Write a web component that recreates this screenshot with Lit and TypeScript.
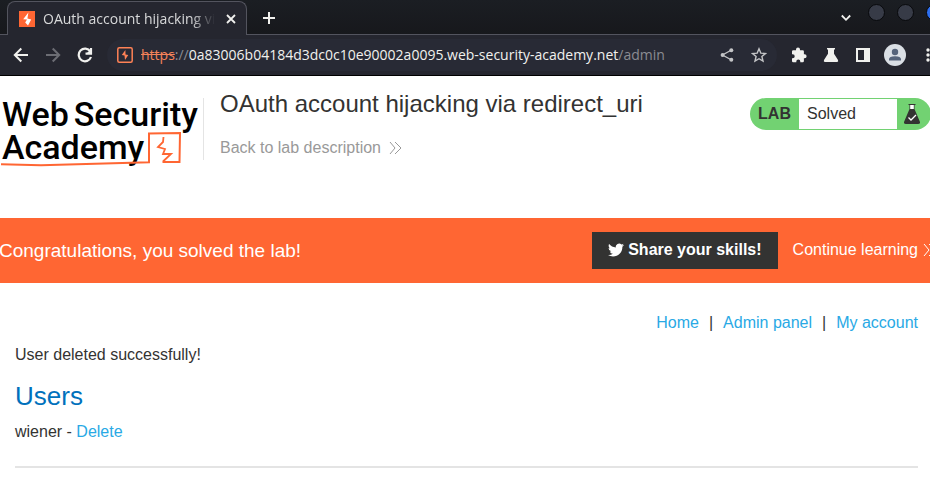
import { LitElement, html, css, svg } from "lit";
import { customElement, property } from "lit/decorators.js";

const bolt = svg`<path d="M9.4 1.5 4.2 8.2 8 8.6 6.2 11.6 9 14.5 12.2 8.6 8.4 7.6Z" />`;

const chevrons = html`<svg class="chevrons" width="13" height="14" viewBox="0 0 13 14" fill="none" stroke="currentColor" aria-hidden="true">
  <path d="M1 1l5 6-5 6M6 1l6 6-6 6" />
</svg>`;

@customElement("browser-chrome")
class BrowserChrome extends LitElement {
  @property() tabTitle = "";
  @property() site = "";
  @property() path = "";

  static styles = css`
    :host {
      display: block;
      background: #25262f;
      border-bottom: 1px solid #000;
      color: #f1f1ee;
      font-family: "Noto Sans", sans-serif;
      font-size: 14px;
      line-height: 20px;
    }
    svg { display: block; flex: none; }
    button {
      display: grid;
      place-items: center;
      flex: none;
      padding: 0;
      border: 0;
      background: none;
      color: inherit;
    }
    .strip {
      display: flex;
      height: 34px;
      padding-left: 7px;
      border-bottom: 1px solid #53545e;
      background: linear-gradient(#1b1e23, #17181c);
    }
    .tab {
      position: relative;
      box-sizing: border-box;
      display: flex;
      align-items: center;
      gap: 8px;
      width: 240px;
      height: 34px;
      margin-top: 1px;
      padding: 0 7px 0 11px;
      border: 1px solid #53545e;
      border-bottom: 0;
      border-radius: 8px 8px 0 0;
      background: #25262f;
    }
    .title {
      flex: 1;
      min-width: 0;
      overflow: hidden;
      white-space: nowrap;
      color: #d8d9da;
      font-family: "Open Sans", sans-serif;
      mask-image: linear-gradient(to right, #000 86%, transparent);
    }
    .close { width: 16px; height: 20px; }
    .add { width: 24px; margin: 1px auto 0 10px; }
    .window { display: flex; gap: 12px; margin-right: -13px; }
    .window button { width: 17px; height: 24px; }
    .menu { margin: 6px 2px 0 0; }
    .dot {
      width: 15px;
      height: 15px;
      border: 1px solid #08090c;
      border-radius: 50%;
      background: #373b47;
    }
    .dot.blue { background: #2d6ff0; }
    .bar {
      display: flex;
      align-items: center;
      height: 40px;
      padding-left: 13px;
    }
    .nav { display: flex; gap: 16px; }
    .nav button { width: 16px; height: 24px; }
    .off { color: #6c6d74; }
    .address {
      flex: 1;
      min-width: 0;
      display: flex;
      align-items: center;
      gap: 8px;
      height: 32px;
      margin: 0 14px;
      padding: 0 10px;
      border-radius: 16px;
      background: #282a35;
    }
    .url { flex: 1; white-space: nowrap; color: #8b8c92; font-family: "Open Sans", sans-serif; }
    .url s { color: #f5835a; }
    .url b { font-weight: 400; color: #f1f1ee; }
    .soft { display: flex; gap: 16px; color: #c4c5c7; }
    .tools { display: flex; align-items: center; gap: 16px; margin-right: -5px; }
    .profile { margin: 0 -3px; }
  `;

  render() {
    return html`
      <div class="strip">
        <div class="tab">
          <svg width="16" height="16" viewBox="0 0 16 16" aria-hidden="true">
            <rect width="16" height="16" fill="#ff6633" />
            <g fill="#fff">${bolt}</g>
          </svg>
          <span class="title">${this.tabTitle}</span>
          <button class="close" aria-label="Close tab">
            <svg width="10" height="10" viewBox="0 0 10 10" stroke="currentColor" stroke-width="1.8"><path d="M1 1l8 8M9 1l-8 8" /></svg>
          </button>
        </div>
        <button class="add" aria-label="New tab">
          <svg width="12" height="12" viewBox="0 0 12 12" stroke="currentColor" stroke-width="2"><path d="M6 0v12M0 6h12" /></svg>
        </button>
        <div class="window">
          <button class="menu" aria-label="Search tabs">
            <svg width="10" height="8" viewBox="0 0 10 8" fill="none" stroke="currentColor" stroke-width="1.8"><path d="M.8 1.5 5 5.8l4.200-4.300" /></svg>
          </button>
          <button aria-label="Minimize"><span class="dot"></span></button>
          <button aria-label="Maximize"><span class="dot"></span></button>
          <button aria-label="Close"><span class="dot blue"></span></button>
        </div>
      </div>
      <div class="bar">
        <div class="nav">
          <button aria-label="Back">
            <svg width="16" height="16" viewBox="0 0 16 16" fill="none" stroke="currentColor" stroke-width="2"><path d="M15 8H2M8.300 1.500 1.800 8l6.500 6.500" /></svg>
          </button>
          <button class="off" aria-label="Forward" disabled>
            <svg width="16" height="16" viewBox="0 0 16 16" fill="none" stroke="currentColor" stroke-width="2"><path d="M1 8h13M7.700 1.500 14.200 8l-6.500 6.500" /></svg>
          </button>
          <button aria-label="Reload">
            <svg width="16" height="16" viewBox="0 0 16 16" fill="none" stroke="currentColor" stroke-width="2.200"><path d="M13.300 4.500A6.300 6.300 0 1 0 14 10M14 1v5.500H8.500" /><path fill="currentColor" stroke="none" d="M15 1v6.500H8.500Z" /></svg>
          </button>
        </div>
        <div class="address">
          <svg width="16" height="16" viewBox="0 0 16 16" aria-hidden="true">
            <rect x=".8" y=".8" width="14.400" height="14.400" rx="1.500" fill="none" stroke="#ff8256" stroke-width="1.500" />
            <path d="M8.400 3 4.800 8l2.700.5L8 13l3.300-5-2.800-.6Z" fill="#ff8256" />
          </svg>
          <span class="url"><s>https</s>://<b>${this.site}</b>${this.path}</span>
          <div class="soft">
            <button aria-label="Share">
              <svg width="16" height="16" viewBox="0 0 16 16" fill="currentColor"><path d="M12.500 3 3.500 8l9 5" fill="none" stroke="currentColor" stroke-width="1.300" /><circle cx="12.300" cy="3.300" r="2" /><circle cx="3.600" cy="8" r="2" /><circle cx="12.300" cy="12.700" r="2" /></svg>
            </button>
            <button aria-label="Bookmark">
              <svg width="16" height="16" viewBox="0 0 16 16" fill="none" stroke="currentColor" stroke-width="1.400"><path d="M8 1.800l1.800 4.300 4.700.4-3.600 3 1.100 4.600L8 11.700 4 14.100l1.100-4.600-3.600-3 4.700-.4Z" /></svg>
            </button>
          </div>
        </div>
        <div class="tools">
          <button aria-label="Extensions">
            <svg width="16" height="16" viewBox="0 0 16 16" fill="currentColor"><path d="M1 4.500Q1 3.300 2.200 3.300H5V2.500a2 2 0 0 1 4 0v.8h2.700q1.200 0 1.200 1.200v2.700h.7a2 2 0 0 1 0 4h-.7V14q0 1.200-1.200 1.200H9.300v-.7a2 2 0 0 0-4 0v.7H2.200Q1 15.200 1 14v-2.800h.7a2 2 0 0 0 0-4H1Z" /></svg>
          </button>
          <button aria-label="Labs">
            <svg width="16" height="16" viewBox="0 0 16 16" fill="currentColor"><path d="M4 1h8v1.600h-1v4.200l4 6.200q.8 1.900-1 2H2q-1.800-.1-1-2l4-6.200V2.600H4Z" /></svg>
          </button>
          <button aria-label="Side panel">
            <svg width="16" height="16" viewBox="0 0 16 16"><path fill="currentColor" fill-rule="evenodd" d="M1 1h14v14H1ZM3 3v10h6V3Z" /></svg>
          </button>
          <button class="profile" aria-label="Profile">
            <svg width="22" height="22" viewBox="0 0 22 22"><circle cx="11" cy="11" r="11" fill="#dadfe5" /><g fill="#55637a"><circle cx="11" cy="8" r="3.200" /><path d="M5 16.500v-1.300q0-3 6-3t6 3v1.300Z" /></g></svg>
          </button>
          <button aria-label="More">
            <svg width="16" height="16" viewBox="0 0 16 16" fill="currentColor"><circle cx="9" cy="3" r="1.700" /><circle cx="9" cy="8" r="1.700" /><circle cx="9" cy="13" r="1.700" /></svg>
          </button>
        </div>
      </div>
    `;
  }
}

@customElement("lab-header")
class LabHeader extends LitElement {
  static styles = css`
    :host {
      display: flex;
      align-items: flex-start;
      box-sizing: border-box;
      min-height: 142px;
      padding-top: 22px;
      overflow: hidden;
    }
    svg { display: block; flex: none; }
    a { text-decoration: none; color: #999; }
    .logo {
      position: relative;
      flex: none;
      box-sizing: border-box;
      width: 204px;
      height: 62px;
      padding-left: 2px;
      border-right: 1px solid #e4e4e4;
      color: #000;
      font: 500 34px/33px Roboto, sans-serif;
    }
    .words { display: flex; gap: 5px; }
    .mark { position: absolute; left: 0; top: 32px; }
    .heading { flex: 1; min-width: 0; padding-left: 16px; }
    h2 { margin: 0; padding-bottom: 28px; font-size: 24px; font-weight: 400; line-height: 12px; }
    .back { display: flex; align-items: center; gap: 8px; line-height: 20px; }
    .status {
      flex: none;
      display: flex;
      align-items: center;
      box-sizing: border-box;
      width: 181px;
      height: 32px;
      margin-right: -1px;
      padding: 1px 0;
      overflow: hidden;
      border-radius: 16px;
      background: #72d272;
    }
    .lab { width: 49px; text-align: center; font-weight: 700; }
    .state { flex: 1; padding-left: 8px; background: #fff; line-height: 30px; }
    .flask { width: 34px; padding-left: 7px; box-sizing: border-box; }
  `;

  render() {
    return html`
      <a class="logo" href="#" aria-label="Web Security Academy">
        <span class="words"><span>Web</span><span>Security</span></span>
        <span class="words">Academy</span>
        <svg class="mark" width="190" height="38" viewBox="0 0 190 38" fill="none" stroke="#ff6633" aria-hidden="true">
          <path stroke-width="2" d="M1 34.300l40 .9L149 32.300 149 3.500l31-.5L179.500 32H162.500" />
          <path stroke-width="1.800" d="M163.500 7l-.5 5-5 5 7 2-2 5h8l-8 7.500" />
        </svg>
      </a>
      <div class="heading">
        <h2>OAuth account hijacking via redirect_uri</h2>
        <a class="back" href="#">Back to lab description ${chevrons}</a>
      </div>
      <div class="status">
        <span class="lab">LAB</span>
        <span class="state">Solved</span>
        <span class="flask">
          <svg width="16" height="22" viewBox="0 0 16 22" aria-hidden="true">
            <path fill="#fff" d="M6 2h4v5H6Z" />
            <path fill="#333332" d="M4.500 1h7v1h-7ZM5.500 2h.7v5h-.7ZM9.800 2h.7v5h-.7ZM5.500 6h5L16 19q.4 2-2 2H2q-2.400 0-2-2Z" />
            <path fill="none" stroke="#fff" stroke-width="1.300" d="M4.500 14.500 7 17l5-5" />
          </svg>
        </span>
      </div>
    `;
  }
}

@customElement("solved-banner")
class SolvedBanner extends LitElement {
  static styles = css`
    :host {
      display: flex;
      align-items: center;
      justify-content: space-between;
      height: 65px;
      overflow: hidden;
      background: #ff6633;
      color: #fff;
    }
    svg { display: block; flex: none; }
    h4 { margin: 0 0 0 -1px; font-size: 19px; font-weight: 400; line-height: 24px; }
    .actions { flex: none; display: flex; align-items: center; gap: 15px; margin-right: -6px; }
    button {
      display: flex;
      align-items: center;
      gap: 4px;
      height: 37px;
      padding: 0 16px 2px;
      border: 0;
      background: #333332;
      color: inherit;
      font: 700 16px/20px "Liberation Sans", Arial, sans-serif;
    }
    a { display: flex; align-items: center; gap: 5px; padding-bottom: 2px; color: inherit; text-decoration: none; }
  `;

  render() {
    return html`
      <h4>Congratulations, you solved the lab!</h4>
      <div class="actions">
        <button>
          <svg width="16" height="16" viewBox="0 0 24 24" fill="currentColor" aria-hidden="true">
            <path d="M23.950 4.570a10 10 0 0 1-2.820.770 4.960 4.960 0 0 0 2.160-2.720c-.950.550-2 .950-3.130 1.180a4.920 4.920 0 0 0-8.380 4.480C7.690 8.090 4.070 6.130 1.640 3.160a4.820 4.820 0 0 0-.670 2.480c0 1.710.870 3.210 2.190 4.100a4.900 4.900 0 0 1-2.230-.620v.060a4.920 4.920 0 0 0 3.950 4.830 5 5 0 0 1-2.210.080 4.940 4.940 0 0 0 4.600 3.420A9.870 9.870 0 0 1 0 19.540a14 14 0 0 0 7.550 2.210c9.050 0 14-7.500 14-13.980 0-.210 0-.420-.020-.630a9.940 9.940 0 0 0 2.420-2.570Z" />
          </svg>
          Share your skills!
        </button>
        <a href="#">Continue learning ${chevrons}</a>
      </div>
    `;
  }
}

@customElement("app-root")
class AppRoot extends LitElement {
  static styles = css`
    :host {
      display: block;
      min-height: 100vh;
      overflow: hidden;
      background: #fff;
      color: #333332;
      font: 16px/20px "Liberation Sans", Arial, sans-serif;
    }
    main { padding: 30px 12px 0 15px; }
    a { color: #29a9e5; text-decoration: none; }
    nav { display: flex; justify-content: flex-end; gap: 10px; }
    p { margin: 12px 0; }
    h1 { margin: 0; padding: 3px 0 10px; color: #0071bc; font-size: 26px; font-weight: 400; line-height: 32px; }
    hr { margin: 24px 0; border: 0; border-top: 2px solid #e4e4e4; }
    .user { margin: 0; }
  `;

  render() {
    return html`
      <browser-chrome
        tabTitle="OAuth account hijacking via redirect_uri"
        site="0a83006b04184d3dc0c10e90002a0095.web-security-academy.net"
        path="/admin"
      ></browser-chrome>
      <lab-header></lab-header>
      <solved-banner></solved-banner>
      <main>
        <nav>
          <a href="#">Home</a><span>|</span><a href="#">Admin panel</a><span>|</span><a href="#">My account</a>
        </nav>
        <p>User deleted successfully!</p>
        <h1>Users</h1>
        <p class="user">wiener - <a href="#">Delete</a></p>
        <hr />
      </main>
    `;
  }
}
